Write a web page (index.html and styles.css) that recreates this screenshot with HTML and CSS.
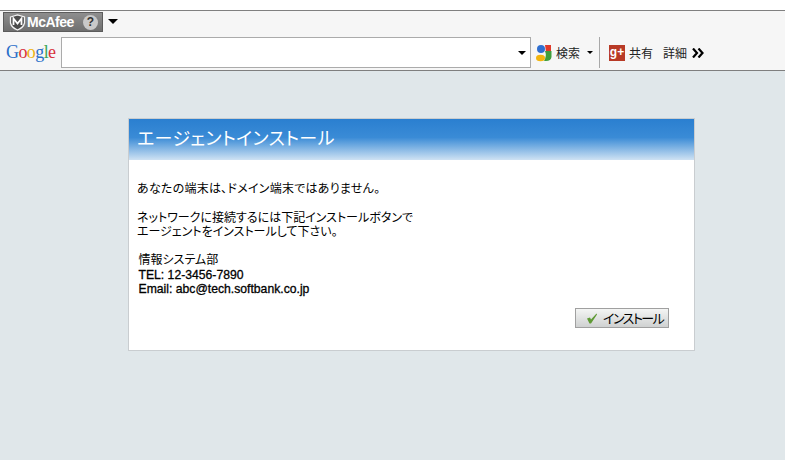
FILE: index.html
```html
<!DOCTYPE html>
<html lang="ja">

<head>
  <meta charset="UTF-8">
  <title>エージェントインストール</title>
  <link rel="stylesheet" href="styles.css">
</head>

<body>

  <!-- Browser toolbars -->
  <header class="toolbar">
    <div class="row-mcafee">
      <div class="mcafee">
        <svg class="shield" width="17" height="17" viewBox="0 0 17 17">
          <path d="M1.5 3 L8.5 1 L15.5 3 L15.5 9 Q14.5 13.5 8.5 16 Q2.500 13.500 1.500 9 Z" fill="#4c4c4c" stroke="#f2f2f2" stroke-width="1.300"/>
          <path d="M4.500 11 L4.500 4.500 L8.500 9.500 L12.500 4.500 L12.500 11" fill="none" stroke="#fff" stroke-width="1.800"/>
        </svg>
        <span class="mcafee-name">McAfee</span>
        <span class="help">?</span>
      </div>
      <span class="arrow arrow-big"></span>
    </div>
    <div class="row-google">
      <div class="google"><span class="g-blue">G</span><span class="g-red">o</span><span class="g-yellow">o</span><span class="g-blue">g</span><span class="g-green">l</span><span class="g-red">e</span></div>
      <div class="searchbox"><span class="arrow"></span></div>
      <svg class="icon-search" width="16" height="18" viewBox="0 0 16 18">
        <circle cx="5" cy="5" r="4" fill="#2f6fd0"/>
        <path d="M9 1 H15 V8 H10 Z" fill="#e03a2a"/>
        <path d="M9 7 H15.500 V13 Q15 17 10 17 L8 17 Q11 12 9 7 Z" fill="#3f9e3a"/>
        <ellipse cx="4.500" cy="14" rx="4.500" ry="3.200" fill="#f2b50f"/>
      </svg>
      <span class="tool-label">検索</span>
      <span class="arrow arrow-small"></span>
      <span class="sep"></span>
      <div class="gplus">g+</div>
      <span class="tool-label">共有</span>
      <span class="tool-label detail">詳細</span>
      <svg class="more" width="12" height="10" viewBox="0 0 12 10">
        <path d="M1 0.500 L5 5 L1 9.500 M6.500 0.500 L10.500 5 L6.500 9.500" fill="none" stroke="#000" stroke-width="2.200"/>
      </svg>
    </div>
  </header>

  <main class="page">
    <section class="panel">
      <h1 class="panel-title">エージェントインストール</h1>
      <div class="panel-body">
        <p class="intro">あなたの端末は、ドメイン端末ではありません。</p>
        <p class="note">ネットワークに接続するには下記インストールボタンで<br>エージェントをインストールして下さい。</p>
        <p class="contact">情報システム部<br><span class="contact-lines">TEL: 12-3456-7890<br>Email: abc@tech.softbank.co.jp</span></p>
        <div class="actions">
          <button class="install" type="button">
            <svg width="12" height="12" viewBox="0 0 12 12">
              <path d="M1 6.500 L4 5.500 L5 7.500 L10.500 1.500 L11 2.500 L5 11.500 L3.500 11.500 Z" fill="#5f9a35"/>
            </svg>
            <span>インストール</span>
          </button>
        </div>
      </div>
    </section>
  </main>

</body>

</html>
```

FILE: styles.css
```css
html, body {
  margin: 0;
  padding: 0;
  background-color: #fff;
}

body {
  padding-top: 10px;
  font-family: "Liberation Sans", "Noto Sans CJK JP", sans-serif;
  font-size: 12px;
  color: #000;
}

/* Toolbars */
.toolbar {
  background-color: #f6f6f6;
  border-top: 1px solid #808080;
  border-bottom: 1px solid #7f7f7f;
  height: 59px;
}

.row-mcafee {
  display: flex;
  align-items: flex-start;
  gap: 5px;
  height: 23px;
  padding: 1px 0 0 3px;
}

.mcafee {
  display: flex;
  align-items: center;
  width: 100px;
  height: 20px;
  padding-left: 5px;
  box-sizing: border-box;
  background: linear-gradient(#8e8e8e, #6f6f6f);
  border: 1px solid #5c5c5c;
}

.mcafee-name {
  margin-left: 1px;
  color: #fff;
  font-size: 14px;
  font-weight: bold;
  letter-spacing: -0.5px;
}

.help {
  width: 15px;
  height: 15px;
  margin-left: 9px;
  border-radius: 50%;
  background-color: #c9c9c9;
  color: #333;
  font-size: 12px;
  font-weight: bold;
  line-height: 15px;
  text-align: center;
}

.arrow {
  width: 0;
  height: 0;
  border-left: 4px solid transparent;
  border-right: 4px solid transparent;
  border-top: 4px solid #000;
}

.arrow-big {
  margin-top: 7px;
  border-left-width: 5px;
  border-right-width: 5px;
  border-top-width: 5px;
}

.arrow-small {
  margin-left: 7px;
  border-left-width: 3px;
  border-right-width: 3px;
  border-top-width: 3px;
}

.row-google {
  display: flex;
  align-items: center;
  height: 35px;
  padding-left: 6px;
}

.google {
  width: 55px;
  font-family: "Liberation Serif", serif;
  font-size: 18px;
  letter-spacing: -0.6px;
}

.g-blue { color: #2a6fc9; }
.g-red { color: #d8323c; }
.g-yellow { color: #eeb211; }
.g-green { color: #3aa757; }

.searchbox {
  display: flex;
  align-items: center;
  justify-content: flex-end;
  width: 470px;
  height: 31px;
  padding-right: 4px;
  box-sizing: border-box;
  background-color: #fff;
  border: 1px solid #ababab;
}

.icon-search {
  margin-left: 5px;
}

.tool-label {
  margin-left: 4px;
  padding-bottom: 1px;
  color: #222;
  font-size: 12px;
}

.sep {
  width: 1px;
  height: 31px;
  margin-left: 6px;
  background-color: #a8a8a8;
}

.gplus {
  width: 16px;
  height: 16px;
  margin-left: 9px;
  background-color: #b83a26;
  color: #fff;
  font-size: 12px;
  font-weight: bold;
  line-height: 14px;
  text-align: center;
}

.detail {
  margin-left: 10px;
}

.more {
  margin-left: 5px;
}

/* Page */
.page {
  height: 389px;
  padding: 47px 0 0 128px;
  box-sizing: border-box;
  background-color: #e0e7ea;
}

.panel {
  width: 567px;
  height: 233px;
  box-sizing: border-box;
  background-color: #fff;
  border: 1px solid #c9cdd0;
}

.panel-title {
  height: 41px;
  margin: 0;
  padding-left: 8px;
  background: linear-gradient(#2a7fd0 0%, #3a8bd6 45%, #cfe2f3 100%);
  color: #fff;
  font-feature-settings: "palt";
  font-size: 18px;
  font-weight: normal;
  letter-spacing: 0.4px;
  line-height: 41px;
}

.panel-body {
  padding: 22px 25px 0 8px;
  line-height: 14px;
  font-feature-settings: "palt";
}

.panel-body p {
  margin: 0;
}

.intro {
  padding-bottom: 15px;
  letter-spacing: 0.25px;
}

.note {
  padding-bottom: 14px;
}

.contact {
  padding-left: 1.500px;
  line-height: 14.500px;
}

.contact-lines {
  font-size: 12.200px;
  -webkit-text-stroke: 0.3px #000;
}

.actions {
  display: flex;
  justify-content: flex-end;
  margin-top: 11px;
}

.install {
  display: flex;
  align-items: center;
  gap: 5px;
  width: 94px;
  height: 20px;
  padding: 0 0 0 10px;
  background: linear-gradient(#f4f5f4, #cfd1d1);
  border: 1px solid #a0a0a0;
  color: #000;
  font-family: inherit;
  font-feature-settings: "palt";
  font-size: 13px;
  letter-spacing: -1.5px;
  white-space: nowrap;
}
```
